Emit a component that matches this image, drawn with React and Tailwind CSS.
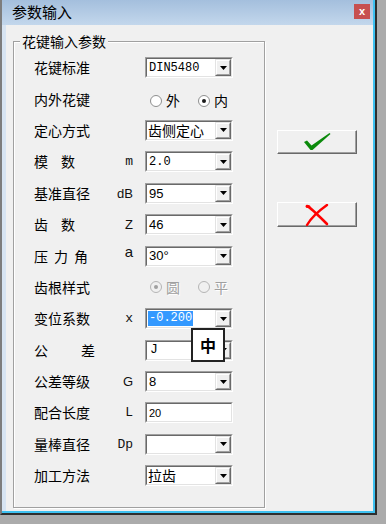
import React from 'react';

const CJK = "font-['Noto_Sans_CJK_SC','Liberation_Sans',sans-serif]";
const MONO = "font-['Liberation_Mono','Noto_Sans_CJK_SC',monospace]";
const SANS = "font-['Liberation_Sans','Noto_Sans_CJK_SC',sans-serif]";

function Arrow() {
  return (
    <div className="w-[16px] h-full flex items-center justify-center bg-[#f0f0f0] border border-t-[#e3e3e3] border-l-[#e3e3e3] border-r-[#696969] border-b-[#696969]">
      <div className="w-full h-full flex items-center justify-center border border-t-white border-l-white border-r-[#a0a0a0] border-b-[#a0a0a0]">
        <svg width="7" height="4" viewBox="0 0 7 4">
          <polygon points="0,0 7,0 3.5,4" fill="#000" />
        </svg>
      </div>
    </div>
  );
}

function Box({ children, dropdown = true }) {
  return (
    <div className="w-[88px] h-[21px] border border-t-[#a0a0a0] border-l-[#a0a0a0] border-r-white border-b-white">
      <div className="w-full h-full flex bg-white border border-t-[#696969] border-l-[#696969] border-r-[#e3e3e3] border-b-[#e3e3e3]">
        <div className="flex-1 flex items-center whitespace-nowrap">{children}</div>
        {dropdown && <Arrow />}
      </div>
    </div>
  );
}

function Radio({ checked, disabled, label }) {
  return (
    <div className="flex items-center gap-[4px]">
      <span
        className={
          'w-[12px] h-[12px] rounded-full border flex items-center justify-center ' +
          (disabled ? 'border-[#b5b5b5] bg-[#f0f0f0]' : 'border-[#8e8f8f] bg-white')
        }
      >
        {checked && (
          <span className={'w-[4px] h-[4px] rounded-full ' + (disabled ? 'bg-[#a0a0a0]' : 'bg-[#1a1a1a]')} />
        )}
      </span>
      <span
        className={
          CJK + ' text-[14px] ' + (disabled ? 'text-[#a0a0a0] [text-shadow:1px_1px_0_#fff]' : 'text-black')
        }
      >
        {label}
      </span>
    </div>
  );
}

function Row({ label, letter, letterFont = SANS, children }) {
  return (
    <div className="h-[31.4px] flex items-center">
      <div className={CJK + ' w-[78px] text-[14px] text-black flex'}>{label}</div>
      <div className={letterFont + ' w-[21px] text-right text-[13px] text-[#111]'}>{letter}</div>
      <div className="ml-[12px]">{children}</div>
    </div>
  );
}

function Spaced({ a, b, c, gap }) {
  return (
    <span className="flex" style={{ gap }}>
      <span>{a}</span>
      <span>{b}</span>
      {c && <span>{c}</span>}
    </span>
  );
}

export default function App() {
  return (
    <div className="relative w-[386px] h-[524px] bg-[#ababab] overflow-hidden">
      <div className="w-[377px] h-[515px] flex border-l-2 border-l-[#7d7d7d] border-r-2 border-b-2 border-r-[#2e2e2e] border-b-[#2e2e2e]">
        <div className="flex-1 flex flex-col border-r-2 border-b-2 border-[#3ec1f0]">
          <div className="h-[25px] flex items-center justify-between pl-[10px] pr-[3px] bg-gradient-to-b from-[#a4bfdd] to-[#c3d7ec]">
            <span className={CJK + ' text-[15px] text-black'}>参数输入</span>
            <div className="w-[16px] h-[15px] mt-[-2px] bg-[#c75050] flex items-center justify-center">
              <span className={SANS + ' text-white text-[11px] font-bold leading-none'}>x</span>
            </div>
          </div>

          <div className="flex-1 flex bg-[#f0f0f0] border-l-4 border-[#d7e4f2]">
            <div className="relative ml-[7px] mt-[16px] w-[252px] h-[467px] border border-[#a0a0a0] shadow-[inset_1px_1px_0_#fff,1px_1px_0_#fff] pl-[20px] pt-[10px]">
              <span className={CJK + ' absolute left-[6px] -top-[11px] px-[2px] leading-[20px] text-[14px] bg-[#f0f0f0] text-black'}>
                花键输入参数
              </span>

              <Row label="花键标准">
                <Box><span className={MONO + ' text-[12px] pl-[2px]'}>DIN5480</span></Box>
              </Row>
              <Row label="内外花键">
                <div className="flex items-center pl-[5px] gap-[18px] pt-[3px]">
                  <Radio label="外" />
                  <Radio label="内" checked />
                </div>
              </Row>
              <Row label="定心方式">
                <Box><span className={CJK + ' text-[14px] leading-[15px] pl-[1px]'}>齿侧定心</span></Box>
              </Row>
              <Row label={<Spaced a="模" b="数" gap="13px" />} letter="m" letterFont={MONO}>
                <Box><span className={MONO + ' text-[12px] pl-[2px]'}>2.0</span></Box>
              </Row>
              <Row label="基准直径" letter="dB">
                <Box><span className={SANS + ' text-[13px] pl-[2px]'}>95</span></Box>
              </Row>
              <Row label={<Spaced a="齿" b="数" gap="13px" />} letter="Z">
                <Box><span className={SANS + ' text-[13px] pl-[2px]'}>46</span></Box>
              </Row>
              <Row label={<Spaced a="压" b="力" c="角" gap="6px" />} letter={<span className="relative -top-[4px] text-[15px]">a</span>}>
                <Box><span className={SANS + ' text-[13px] pl-[2px]'}>30°</span></Box>
              </Row>
              <Row label="齿根样式">
                <div className="flex items-center pl-[5px] gap-[18px]">
                  <Radio label="圆" checked disabled />
                  <Radio label="平" disabled />
                </div>
              </Row>
              <Row label="变位系数" letter="x" letterFont={MONO}>
                <Box>
                  <span className={MONO + ' text-[12px] ml-[1px] px-[1px] bg-[#3399ff] text-white leading-[15px]'}>-0.200</span>
                </Box>
              </Row>
              <Row label={<Spaced a="公" b="差" gap="33px" />}>
                <Box><span className={MONO + ' text-[13px] pl-[3px]'}>J</span></Box>
              </Row>
              <Row label="公差等级" letter="G">
                <Box><span className={SANS + ' text-[13px] pl-[2px]'}>8</span></Box>
              </Row>
              <Row label="配合长度" letter="L" letterFont={MONO}>
                <Box dropdown={false}><span className={SANS + ' text-[11px] pl-[2px]'}>20</span></Box>
              </Row>
              <Row label="量棒直径" letter="Dp" letterFont={MONO}>
                <Box />
              </Row>
              <Row label="加工方法">
                <Box><span className={CJK + ' text-[14px] leading-[15px] pl-[1px]'}>拉齿</span></Box>
              </Row>
            </div>

            <div className="ml-[12px] mt-[105px] flex flex-col gap-[48px]">
              <button className="w-[80px] h-[24px] flex items-center justify-center bg-[#f0f0f0] border border-t-white border-l-white border-r-[#696969] border-b-[#696969] shadow-[inset_-1px_-1px_0_#a0a0a0]">
                <svg width="27" height="18" viewBox="0 0 27 18">
                  <polygon points="0,9 3,7.5 7.5,12.5 25.5,0 26.5,1 8.5,17 6.5,17" fill="#0b8a0b" />
                </svg>
              </button>
              <button className="w-[80px] h-[25px] flex items-center justify-center bg-[#f0f0f0] border border-t-white border-l-white border-r-[#696969] border-b-[#696969] shadow-[inset_-1px_-1px_0_#a0a0a0]">
                <svg width="24" height="22" viewBox="0 0 24 22">
                  <path d="M2 2 C5 3 14 12 22 20" stroke="#f00" strokeWidth="2.6" fill="none" strokeLinecap="round" />
                  <path d="M22 1 C15 6 6 14 2 21" stroke="#f00" strokeWidth="2.4" fill="none" strokeLinecap="round" />
                  <ellipse cx="3" cy="2.5" rx="2.5" ry="1.6" fill="#f00" />
                </svg>
              </button>
            </div>
          </div>
        </div>
      </div>

      <div className="absolute left-[191px] top-[328px] w-[34px] h-[34px] bg-white border-2 border-[#222] flex items-center justify-center">
        <span className={CJK + ' text-[16px] font-bold text-black leading-none'}>中</span>
      </div>
    </div>
  );
}
